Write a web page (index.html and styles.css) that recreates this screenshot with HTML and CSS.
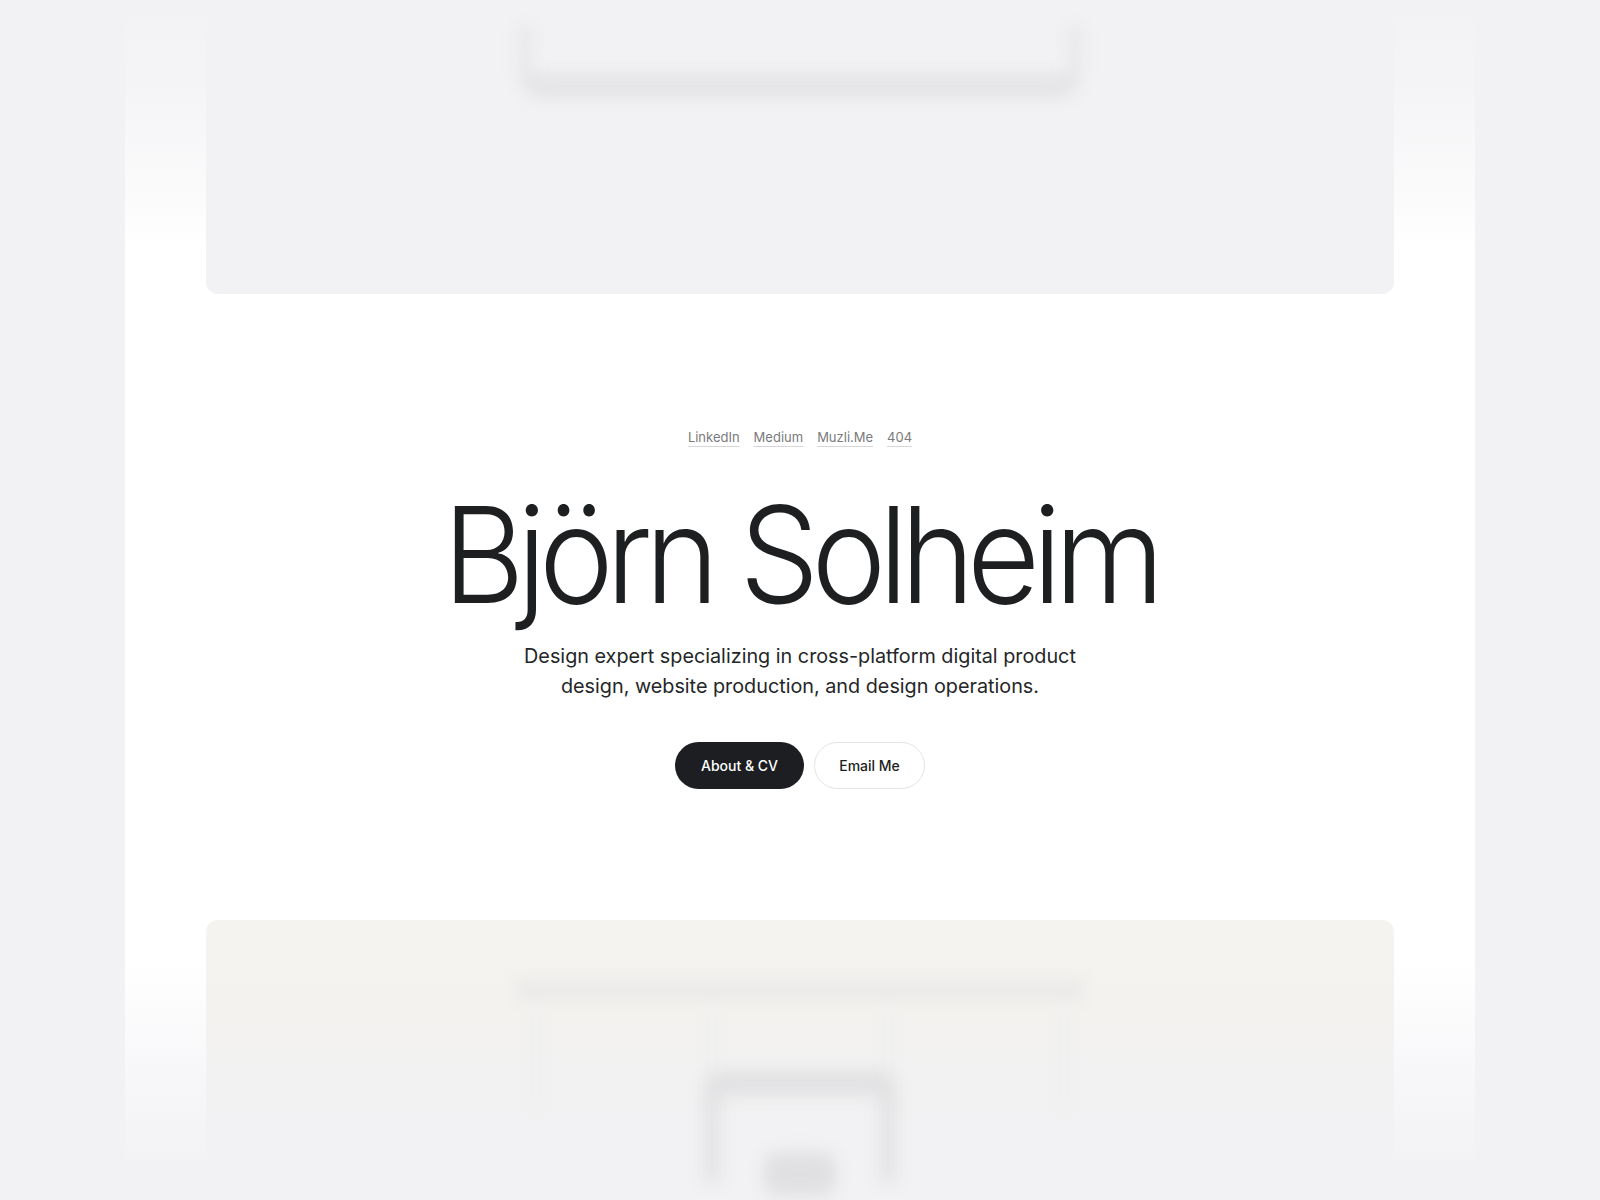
FILE: index.html
```html
<!DOCTYPE html>
<html lang="en">
<head>
<meta charset="utf-8">
<title>Björn Solheim</title>
<link rel="stylesheet" href="styles.css">
</head>
<body>
<div class="frame">
  <section class="card card-top">
    <div class="blur-bar"></div>
  </section>

  <main class="hero">
    <nav class="links">
      <a href="#">LinkedIn</a>
      <a href="#">Medium</a>
      <a href="#">Muzli.Me</a>
      <a href="#">404</a>
    </nav>
    <h1 class="name">Björn Solheim</h1>
    <p class="lead">Design expert specializing in cross-platform digital product<br>design, website production, and design operations.</p>
    <div class="actions">
      <a class="btn btn-dark" href="#">About &amp; CV</a>
      <a class="btn btn-light" href="#">Email Me</a>
    </div>
  </main>

  <section class="card card-bottom">
    <div class="blur-table">
      <div class="blur-head"></div>
      <div class="blur-cols">
        <span></span><span></span><span></span><span></span>
      </div>
    </div>
    <div class="blur-box"></div>
    <div class="blur-blob"></div>
  </section>
</div>
</body>
</html>
```

FILE: styles.css
```css
* { box-sizing: border-box; }

html, body {
  margin: 0;
  padding: 0;
  background: #f2f2f5;
  height: 1200px;
  overflow: hidden;
}

body {
  font-family: Inter, "Noto Sans", sans-serif;
  color: #1d1f21;
}

.frame {
  width: 1350px;
  height: 1200px;
  margin: 0 auto;
  display: flex;
  flex-direction: column;
  background: linear-gradient(to bottom,
    #f2f2f5 0px, #f4f4f6 80px, #fbfbfc 200px, #ffffff 250px,
    #ffffff 960px, #f8f8fa 1060px, #f2f2f5 1170px);
}

.card {
  margin: 0 81px;
  flex: none;
}

.card-top {
  height: 294px;
  background: #f2f2f5;
  border-radius: 0 0 12px 12px;
  padding-top: 26px;
  overflow: hidden;
}

.blur-bar {
  width: 560px;
  height: 72px;
  margin: 0 auto;
  border: 10px solid #e4e4e6;
  border-top: none;
  border-bottom-width: 24px;
  border-radius: 0 0 22px 22px;
  filter: blur(8px);
}

.hero {
  height: 626px;
  flex: none;
  display: flex;
  flex-direction: column;
  align-items: center;
  padding-top: 133px;
}

.links {
  display: flex;
  gap: 14px;
  font-size: 13px;
  line-height: 20px;
}

.links a {
  color: #7a7a7c;
  text-decoration: underline;
  text-decoration-color: #d6d6d8;
  text-underline-offset: 4px;
  text-decoration-thickness: 1px;
}

.name {
  margin: 40px 0 0;
  font-size: 134px;
  font-weight: 300;
  line-height: 1;
  letter-spacing: -0.06em;
  color: #1d1f21;
  white-space: nowrap;
  transform: scaleX(0.94);
}

.lead {
  margin: 20px 0 0;
  font-size: 19.8px;
  line-height: 30px;
  text-align: center;
  color: #242628;
}

.actions {
  margin-top: 41px;
  display: flex;
  gap: 10px;
}

.btn {
  height: 47px;
  display: inline-flex;
  align-items: center;
  justify-content: center;
  border-radius: 24px;
  font-size: 14px;
  font-weight: 500;
  text-decoration: none;
}

.btn-dark {
  width: 129px;
  background: #1c1e21;
  color: #ffffff;
}

.btn-light {
  width: 111px;
  background: #ffffff;
  color: #1c1e21;
  border: 1.5px solid #e4e4e6;
}

.card-bottom {
  flex: 1;
  border-radius: 12px 12px 0 0;
  background: linear-gradient(to bottom, #f4f3ef 0px, #f3f2ef 90px, #f2f2f3 170px, #f2f2f5 280px);
  padding-top: 58px;
  display: flex;
  flex-direction: column;
  align-items: center;
  overflow: hidden;
}

.blur-table {
  width: 568px;
  filter: blur(6px);
}

.blur-head {
  height: 24px;
  background: #ecebea;
  border-radius: 4px;
}

.blur-cols {
  height: 110px;
  display: flex;
  justify-content: space-between;
  padding: 0 16px;
}

.blur-cols span {
  width: 8px;
  background: #efefef;
}

.blur-box {
  margin-top: -40px;
  width: 190px;
  height: 110px;
  border: 14px solid #dfdfe1;
  border-top-width: 22px;
  border-bottom: none;
  border-radius: 16px 16px 0 0;
  filter: blur(9px);
}

.blur-blob {
  margin-top: -30px;
  width: 72px;
  height: 44px;
  background: #e0e0e2;
  border-radius: 14px;
  filter: blur(8px);
}
```
